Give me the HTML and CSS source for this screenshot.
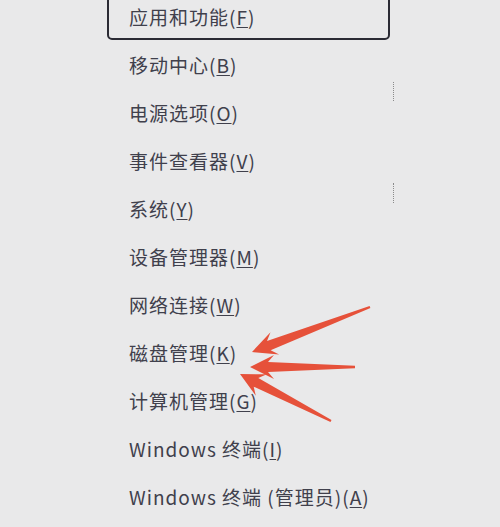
FILE: index.html
```html
<!DOCTYPE html>
<html lang="zh-CN">
<head>
<meta charset="utf-8">
<link rel="stylesheet" href="styles.css">
</head>
<body>
<div class="page">
  <ul class="menu">
    <li class="item focused">应用和功能(<u>F</u>)</li>
    <li class="item">移动中心(<u>B</u>)</li>
    <li class="item">电源选项(<u>O</u>)</li>
    <li class="item">事件查看器(<u>V</u>)</li>
    <li class="item">系统(<u>Y</u>)</li>
    <li class="item">设备管理器(<u>M</u>)</li>
    <li class="item">网络连接(<u>W</u>)</li>
    <li class="item">磁盘管理(<u>K</u>)</li>
    <li class="item">计算机管理(<u>G</u>)</li>
    <li class="item">Windows 终端(<u>I</u>)</li>
    <li class="item">Windows 终端 (管理员)(<u>A</u>)</li>
  </ul>
  <div class="dots dots-1"></div>
  <div class="dots dots-2"></div>
  <svg class="arrows" width="500" height="527" viewBox="0 0 500 527">
    <polygon fill="#e6513a" points="369.6,306.1 267,340.9 270.5,332.2 252,352 279.1,354.6 270.6,350.3 370.4,307.9"/>
    <polygon fill="#e6513a" points="355,365.8 268,362 274,355 250,367 274,379 268,372 355,368.2"/>
    <polygon fill="#e6513a" points="331.5,420.1 258.3,377.9 266.8,374.3 240,374 255.8,395.7 253.7,386.7 330.5,421.9"/>
  </svg>
</div>
</body>
</html>
```

FILE: styles.css
```css
html, body {
  margin: 0;
  padding: 0;
  background: #e9e9ea;
}
.page {
  position: relative;
  width: 500px;
  height: 527px;
  overflow: hidden;
  font-family: "Noto Sans CJK SC", "Noto Sans", sans-serif;
}
.menu {
  list-style: none;
  margin: -8px 0 0 107px;
  padding: 0;
  width: 283px;
}
.item {
  height: 48px;
  box-sizing: border-box;
  padding-left: 22px;
  display: flex;
  align-items: center;
  font-size: 19px;
  letter-spacing: 1px;
  color: #40404c;
  white-space: nowrap;
}
.item u {
  text-decoration-thickness: 1px;
  text-underline-offset: 2px;
}
.focused {
  border: 2px solid #2b2b34;
  border-radius: 5px;
  padding-left: 20px;
}
.dots {
  position: absolute;
  left: 393px;
  width: 0;
  border-left: 1px dotted #8a8a8a;
}
.dots-1 { top: 82px; height: 19px; }
.dots-2 { top: 183px; height: 20px; }
.arrows {
  position: absolute;
  left: 0;
  top: 0;
}
```
